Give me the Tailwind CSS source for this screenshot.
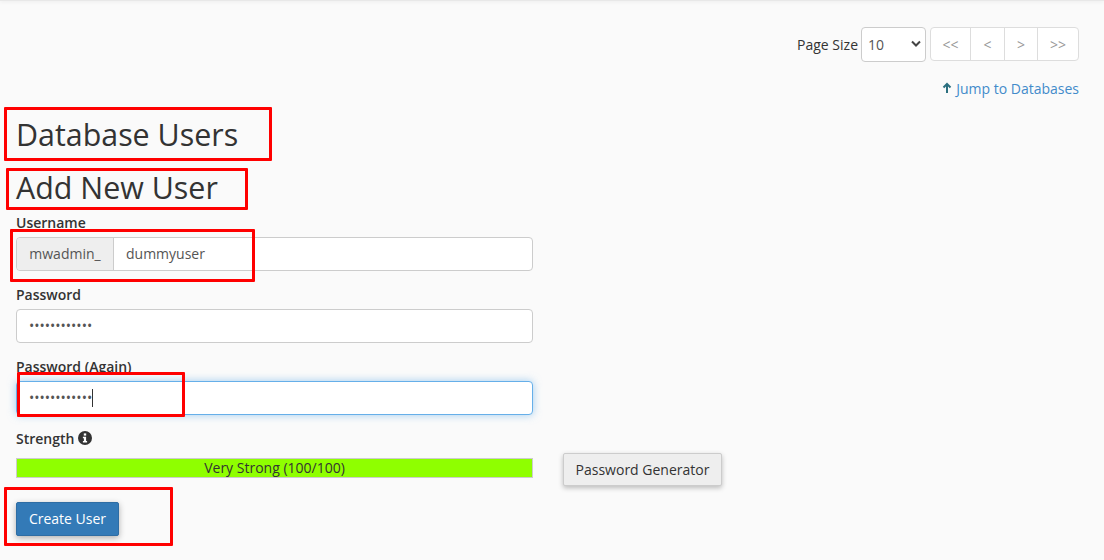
<!DOCTYPE html>
<html lang="en">

<head>
  <meta charset="UTF-8" />
  <title>Database Users</title>
  <script src="https://cdn.jsdelivr.net/npm/@tailwindcss/browser@4"></script>
</head>

<body class="relative h-[560px] w-[1104px] overflow-hidden bg-[#fafafa] font-['Open_Sans',sans-serif] text-[14px] text-[#333]">

  <!-- Top shadow -->
  <div class="h-[1px] bg-[#e8e8e8] shadow-[0_0_4px_rgba(0,0,0,0.18)]"></div>

  <main class="pl-[16px] pr-[25px]">
    <!-- Pagination -->
    <div class="flex h-[34px] mt-[26px] items-center justify-end">
      <span class="mr-[3px]">Page Size</span>
      <div class="flex h-[35px] w-[65px] items-center justify-between rounded-[4px] border border-[#ccc] bg-white pl-[6px] pr-[3px] text-[#555]">
        <span>10</span>
        <svg width="10" height="8" viewBox="0 0 10 8" class="mr-[1px]"><path d="M1 1.5 5 5.5 9 1.5" fill="none" stroke="#444" stroke-width="2" /></svg>
      </div>
      <div class="ml-[4px] flex h-[34px] rounded-[4px] border border-[#ddd] bg-white text-[#999]">
        <span class="flex w-[40px] items-center justify-center border-r border-[#ddd]">&lt;&lt;</span>
        <span class="flex w-[34px] items-center justify-center border-r border-[#ddd]">&lt;</span>
        <span class="flex w-[33px] items-center justify-center border-r border-[#ddd]">&gt;</span>
        <span class="flex w-[40px] items-center justify-center">&gt;&gt;</span>
      </div>
    </div>

    <!-- Jump link -->
    <div class="mt-[17px] flex h-[20px] items-center justify-end text-[#428bca]">
      <svg width="10" height="12" viewBox="0 0 10 12" class="mr-[4px]"><path d="M5 11V2M1.5 5.5 5 2l3.5 3.5" fill="none" stroke="#2b6f7f" stroke-width="2" /></svg>
      <a href="#">Jump to Databases</a>
    </div>

    <h1 class="mt-[16px] h-[41px] text-[30.4px] leading-[41px]">Database Users</h1>
    <h2 class="mt-[12px] h-[41px] text-[30.4px] leading-[41px]">Add New User</h2>

    <form class="mt-[5px] w-[517px]">
      <label class="mb-[4px] block h-[20px] font-semibold leading-[20px]">Username</label>
      <div class="flex h-[34px] rounded-[4px] border border-[#ccc] bg-white text-[#555]">
        <span class="flex w-[97px] items-center justify-center rounded-l-[4px] border-r border-[#ccc] bg-[#eee] pb-[1px]">mwadmin_</span>
        <span class="flex items-center pb-[1px] pl-[12px]">dummyuser</span>
      </div>

      <label class="mb-[4px] mt-[14px] block h-[20px] font-semibold leading-[20px]">Password</label>
      <div class="flex h-[34px] items-center rounded-[4px] border border-[#ccc] bg-white pb-[1px] pl-[12px] text-[#555]">
        <span>••••••••••••</span>
      </div>

      <label class="mb-[4px] mt-[14px] block h-[20px] font-semibold leading-[20px]">Password (Again)</label>
      <div class="flex h-[34px] items-center rounded-[4px] border border-[#66afe9] bg-white pb-[1px] pl-[12px] text-[#555] shadow-[0_0_8px_rgba(102,175,233,0.6)]">
        <span>••••••••••••</span>
        <span class="h-[18px] w-[1px] bg-[#333]"></span>
      </div>

      <div class="mt-[13px] flex h-[20px] items-center font-semibold">
        Strength
        <svg width="14" height="14" viewBox="0 0 14 14" class="ml-[4px]"><circle cx="7" cy="7" r="7" fill="#333" /><rect x="5.8" y="2.4" width="2.4" height="2.2" fill="#fff" /><path d="M4.9 5.8h3.2v4.2h1v1.4H4.9V10h1V7.2h-1z" fill="#fff" /></svg>
      </div>

      <div class="relative mt-[10px]">
        <div class="flex h-[20px] items-center justify-center border border-[#ccc] bg-[#8fff00] pb-[1px] text-[#333]">Very Strong (100/100)</div>
        <button type="button" class="absolute left-[547px] top-[-5px] h-[33px] w-[159px] rounded-[2px] border border-[#ccc] bg-[#eee] text-[#333] shadow-[0_2px_5px_rgba(0,0,0,0.25)]">Password Generator</button>
      </div>

      <button type="button" class="mt-[24px] h-[34px] w-[103px] rounded-[2px] border border-[#2e6da4] bg-[#337ab7] pb-[1px] text-white shadow-[0_2px_6px_rgba(0,0,0,0.3)]">Create User</button>
    </form>
  </main>

  <!-- Red annotation boxes -->
  <div class="absolute left-[4px] top-[107px] h-[54px] w-[268px] rounded-[1px] border-[3px] border-[#f00]"></div>
  <div class="absolute left-[6px] top-[168px] h-[42px] w-[242px] rounded-[1px] border-[3px] border-[#f00]"></div>
  <div class="absolute left-[10px] top-[229px] h-[53px] w-[245px] rounded-[1px] border-[3px] border-[#f00]"></div>
  <div class="absolute left-[17px] top-[372px] h-[45px] w-[168px] rounded-[1px] border-[3px] border-[#f00]"></div>
  <div class="absolute left-[4px] top-[487px] h-[59px] w-[169px] rounded-[1px] border-[3px] border-[#f00]"></div>

</body>

</html>
